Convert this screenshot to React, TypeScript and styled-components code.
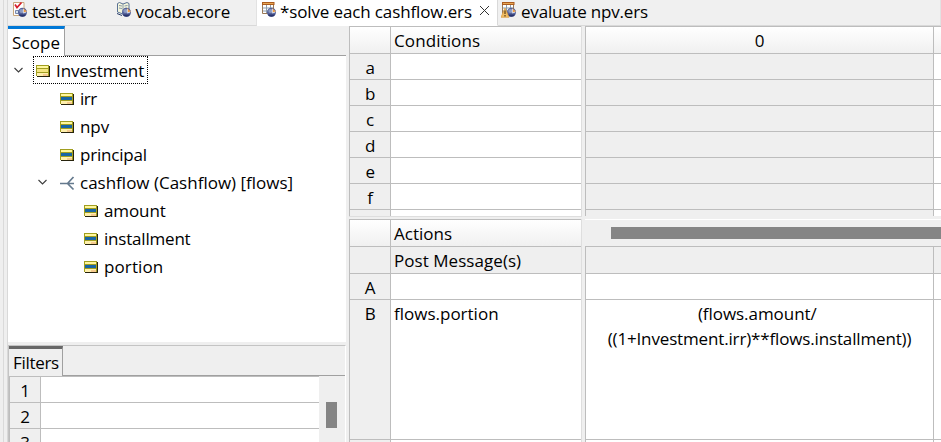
import React from "react";
import styled, { createGlobalStyle } from "styled-components";

const GlobalStyle = createGlobalStyle`
  * { box-sizing: border-box; }
  html, body { margin: 0; overflow: hidden; background: #f0f0f0; }
  body { font-family: "Open Sans", "Noto Sans", sans-serif; font-size: 17px; color: #000; }
`;

const line = "#bdbdbd";
const face = "#efefef";

const Window = styled.div`
  width: 941px;
  height: 442px;
  display: grid;
  grid-template-columns: 8px 1fr;
  overflow: hidden;
  background: ${face};
`;
const Edge = styled.div`
  border-right: 1px solid #d9d9d9;
  display: flex;
  &::before { content: ""; width: 3px; border-right: 1px solid #dadada; }
`;
const Main = styled.div`
  display: grid;
  grid-template-rows: 26px 416px;
  min-width: 0;
`;
const TabBar = styled.div`
  display: flex;
  background: #f0f0f0;
`;
const EditorTab = styled.div<{ $w?: number; $active?: boolean; $pad: number }>`
  flex: ${(p) => (p.$w ? `0 0 ${p.$w}px` : "1")};
  display: flex;
  align-items: flex-start;
  padding-left: ${(p) => p.$pad}px;
  background: ${(p) => (p.$active ? "#fff" : "#f0f0f0")};
  border-bottom: 1px solid ${(p) => (p.$active ? "#fff" : "#d9d9d9")};
  border-right: 1px solid ${(p) => (p.$active ? "#d9d9d9" : "#e2e2e2")};
  svg { flex: none; }
`;
const Text = styled.span<{ $ls?: number; $left?: number }>`
  white-space: pre;
  line-height: 24px;
  letter-spacing: ${(p) => p.$ls ?? -0.3}px;
  margin-left: ${(p) => p.$left ?? 0}px;
`;
const Close = styled.svg`
  margin: 5px 0 0 7px;
`;
const Body = styled.div`
  display: grid;
  grid-template-columns: 338px 3px 1fr;
  min-width: 0;
`;
const Side = styled.div`
  display: grid;
  grid-template-rows: 316px 100px;
`;
const Panel = styled.div`
  display: flex;
  flex-direction: column;
  overflow: hidden;
`;
const FilterPanel = styled(Panel)`
  margin-top: 3px;
  border-top: 1px solid #c4c4c4;
  border-left: 1px solid #c4c4c4;
  border-right: 1px solid #fff;
`;
const PanelTabs = styled.div`
  display: flex;
  height: 30px;
  flex: none;
  &::after { content: ""; flex: 1; border-bottom: 1px solid #a0a0a0; }
`;
const PanelTab = styled.div<{ $accent: string; $w: number; $bg: string }>`
  width: ${(p) => p.$w}px;
  border-top: 3px solid ${(p) => p.$accent};
  border-right: 1px solid #a0a0a0;
  background: ${(p) => p.$bg};
  padding: 2px 0 0 4px;
  white-space: nowrap;
`;
const Tree = styled.div`
  flex: 1;
  background: #fff;
`;
const TreeRow = styled.div<{ $depth: number }>`
  height: 28px;
  display: flex;
  align-items: center;
  padding-left: ${(p) => 4 + p.$depth * 24}px;
`;
const Twisty = styled.div`
  width: 24px;
  height: 28px;
  display: flex;
  flex: none;
  padding: 10px 0 0 2px;
`;
const NodeLabel = styled.div<{ $focus?: boolean }>`
  display: flex;
  align-items: center;
  height: 28px;
  width: ${(p) => (p.$focus ? "115px" : "auto")};
  margin-left: -3px;
  padding: 2px 0 0 2px;
  border: 1px dotted ${(p) => (p.$focus ? "#000" : "transparent")};
  svg { margin-right: 5px; flex: none; }
`;
const FilterBody = styled.div`
  display: grid;
  grid-template-columns: 310px 1fr;
  grid-template-rows: 100%;
  flex: 1;
  min-height: 0;
`;
const Rows = styled.div`
  overflow: hidden;
  border-left: 1px solid ${line};
`;
const FilterRow = styled.div`
  display: grid;
  grid-template-columns: 30px 1fr;
  grid-template-rows: 25px;
  height: 26px;
  border-top: 1px solid ${line};
`;
const FilterNumber = styled.div`
  background: ${face};
  text-align: center;
  line-height: 27px;
`;
const FilterValue = styled.div`
  background: #fff;
  border-left: 1px solid ${line};
`;
const VScroll = styled.div`
  padding: 26px 0 0 7px;
  &::before { content: ""; display: block; width: 11px; height: 26px; background: #858585; }
`;
const Sheet = styled.div`
  display: grid;
  grid-template-columns: 233px 3px 1fr;
  grid-template-rows: 190px 3px 223px;
  min-width: 0;
`;
const Sash = styled.div`
  background: ${face};
  grid-row: 1 / 4;
  grid-column: 2;
`;
const Gap = styled.div`
  border-top: 1px solid #dedede;
`;
const Pane = styled.div<{ $col: number; $row: number }>`
  grid-column: ${(p) => p.$col};
  grid-row: ${(p) => p.$row};
  overflow: hidden;
  border-right: ${(p) => (p.$col === 1 ? "1px solid #dedede" : "0")};
`;
const RuleRow = styled.div<{ $h: number; $right?: boolean }>`
  display: grid;
  grid-template-columns: ${(p) => (p.$right ? "348px 1fr" : "41px 1fr")};
  grid-template-rows: ${(p) => p.$h}px;
`;
const Cell = styled.div<{ $kind?: "head" | "face" | "white"; $center?: boolean }>`
  border-top: 1px solid ${line};
  border-left: 1px solid ${line};
  background: ${(p) =>
    p.$kind === "head" ? "linear-gradient(#fff, #f0f0f0)" : p.$kind === "face" ? face : "#fff"};
  padding: 2px 0 0 ${(p) => (p.$center ? 0 : 3)}px;
  text-align: ${(p) => (p.$center ? "center" : "left")};
  white-space: nowrap;
`;
const Formula = styled.div`
  line-height: 25px;
  white-space: pre;
  &:first-child { margin-top: -1px; }
`;
const HScroll = styled.div`
  height: 27px;
  border-top: 1px solid #fff;
  padding: 7px 0 0 26px;
  &::before { content: ""; display: block; height: 12px; background: #858585; }
`;

type DocKind = "test" | "vocab" | "sheet" | "warn";
const DocIcon = ({ kind }: { kind: DocKind }) => (
  <svg width="18" height="20" viewBox="0 0 18 20">
    {kind === "test" && (
      <g>
        <path d="M1.5 2.500h10.500v13h-10.500z" fill="#fff" stroke="#c9a77c" />
        <path d="M3 4.500l2 3 4.500-5" fill="none" stroke="#d6202c" strokeWidth="1.700" />
        <path d="M3.500 10.500h3v3h-3z" fill="#d5e2ee" stroke="#7889ad" />
      </g>
    )}
    {kind === "vocab" && (
      <g stroke="#5b7294">
        <path d="M1.500 3.500l2-1 3.500 1.500 4-1.500 2 1v9l-6 1.500-5.500-2z" fill="#f4f6dc" />
        <path d="M7 4v9M3 5.500l3 .5M3 8l3 .5M8.500 6l3-.5M8.500 8.500l2-.5" fill="none" stroke="#8999a8" />
        <path d="M1 13.500l5 2" stroke="#263c68" />
      </g>
    )}
    {(kind === "sheet" || kind === "warn") && (
      <g>
        <path d="M1.500 3h11v10.500h-11z" fill="#fff" stroke="#9a7855" />
        <path d="M1 2h12.500v3h-12.500z" fill="#ad5c1f" />
        <path d="M2 3.500h10.500" stroke="#e7a855" />
        <path d="M2 8h10M2 11h8M5.500 5v8M9.500 5v6" stroke="#8c9cab" />
      </g>
    )}
    <circle cx="10.500" cy="12.300" r="4.500" fill="#56629a" />
    <path d="M6.500 14.500a4.500 4.500 0 0 0 7.800 0z" fill="#29346c" />
    <circle cx="9.300" cy="11" r="2" fill="#8c9bc2" />
    <path d="M11 8l4 3.500-3.500 1.500z" fill="#ef9b41" />
    <path d="M11.300 9v4l3-1" fill="none" stroke="#d9dfed" />
    {kind === "warn" && (
      <g>
        <path d="M4 8l4 9.300h-8z" fill="#f0bd65" stroke="#dd9a38" strokeWidth=".7" />
        <path d="M4 10.500v3.500M4 15v1.500" stroke="#5d3c12" strokeWidth="1.200" />
      </g>
    )}
  </svg>
);

const EntityIcon = ({ attribute }: { attribute?: boolean }) => (
  <svg width="15" height="13" viewBox="0 0 15 13" shapeRendering="crispEdges">
    <path d="M1 1h13v11h-13z" fill="#27230c" />
    <path d="M0 0h13v11h-13z" fill="#a19e20" />
    <path d="M1 1h11v2h-11z" fill="#fff79c" />
    <path d="M1 4h11v3h-11z" fill={attribute ? "#1765a5" : "#f5e681"} />
    <path d="M1 8h11v3h-11z" fill="#fff0ad" />
    <path d="M7 9h5v2h-5z" fill="#f6cb90" />
  </svg>
);
const BranchIcon = () => (
  <svg width="15" height="15" viewBox="0 0 15 15">
    <path d="M0 7.500h14M7.500 7.500l6-6.500M7.500 7.500l6 6" fill="none" stroke="#64798d" strokeWidth="1.700" />
  </svg>
);
const Chevron = () => (
  <svg width="9" height="9" viewBox="0 0 9 9">
    <path d="M.5 2l4 4 4-4" fill="none" stroke="#3c3c3c" strokeWidth="1.100" />
  </svg>
);

type Node = { label: string; depth: number; kind: "entity" | "attr" | "assoc"; ls?: number };
const nodes: Node[] = [
  { label: "Investment", depth: 0, kind: "entity", ls: -0.1 },
  { label: "irr", depth: 1, kind: "attr", ls: -0.5 },
  { label: "npv", depth: 1, kind: "attr", ls: -0.1 },
  { label: "principal", depth: 1, kind: "attr", ls: -0.2 },
  { label: "cashflow (Cashflow) [flows]", depth: 1, kind: "assoc", ls: 0 },
  { label: "amount", depth: 2, kind: "attr", ls: -0.1 },
  { label: "installment", depth: 2, kind: "attr", ls: -0.2 },
  { label: "portion", depth: 2, kind: "attr", ls: 0.1 },
];

export default function App() {
  return (
    <Window>
      <GlobalStyle />
      <Edge />
      <Main>
        <TabBar>
          <EditorTab $w={249} $pad={4}>
            <DocIcon kind="test" />
            <Text $left={2} $ls={-0.4}>test.ert</Text>
            <Text $left={30} />
            <DocIcon kind="vocab" />
            <Text $left={2} $ls={-0.1}>vocab.ecore</Text>
          </EditorTab>
          <EditorTab $w={241} $pad={4} $active>
            <DocIcon kind="sheet" />
            <Text $left={1} $ls={-0.13}>*solve each cashflow.ers</Text>
            <Close width="11" height="11" viewBox="0 0 11 11">
              <path d="M1 1l9 9M10 1l-9 9" stroke="#333" />
            </Close>
          </EditorTab>
          <EditorTab $pad={3}>
            <DocIcon kind="warn" />
            <Text $left={2} $ls={-0.2}>evaluate npv.ers</Text>
          </EditorTab>
        </TabBar>
        <Body>
          <Side>
            <Panel>
              <PanelTabs>
                <PanelTab $accent="#0078d7" $w={57} $bg="#fff"><Text $ls={0.1}>Scope</Text></PanelTab>
              </PanelTabs>
              <Tree>
                {nodes.map((n) => (
                  <TreeRow key={n.label} $depth={n.depth}>
                    <Twisty>{n.kind !== "attr" && <Chevron />}</Twisty>
                    <NodeLabel $focus={n.kind === "entity"}>
                      {n.kind === "assoc" ? <BranchIcon /> : <EntityIcon attribute={n.kind === "attr"} />}
                      <Text $ls={n.ls}>{n.label}</Text>
                    </NodeLabel>
                  </TreeRow>
                ))}
              </Tree>
            </Panel>
            <FilterPanel>
              <PanelTabs>
                <PanelTab $accent="#686868" $w={54} $bg={face}><Text>Filters</Text></PanelTab>
              </PanelTabs>
              <FilterBody>
                <Rows>
                  {[1, 2, 3].map((n) => (
                    <FilterRow key={n}>
                      <FilterNumber>{n}</FilterNumber>
                      <FilterValue />
                    </FilterRow>
                  ))}
                </Rows>
                <VScroll />
              </FilterBody>
            </FilterPanel>
          </Side>
          <div />
          <Sheet>
            <Pane $col={1} $row={1}>
              <RuleRow $h={27}>
                <Cell $kind="head" />
                <Cell $kind="head"><Text $ls={0.1}>Conditions</Text></Cell>
              </RuleRow>
              {["a", "b", "c", "d", "e", "f", ""].map((l) => (
                <RuleRow $h={26} key={l}>
                  <Cell $kind="face" $center><Text>{l}</Text></Cell>
                  <Cell />
                </RuleRow>
              ))}
            </Pane>
            <Sash />
            <Pane $col={3} $row={1}>
              <RuleRow $h={27} $right>
                <Cell $kind="head" $center><Text>0</Text></Cell>
                <Cell $kind="head" />
              </RuleRow>
              {["a", "b", "c", "d", "e", "f", "g"].map((l) => (
                <RuleRow $h={26} $right key={l}>
                  <Cell $kind="face" />
                  <Cell />
                </RuleRow>
              ))}
            </Pane>
            <Gap />
            <Pane $col={1} $row={3}>
              <RuleRow $h={27}>
                <Cell $kind="head" />
                <Cell $kind="head"><Text $ls={0}>Actions</Text></Cell>
              </RuleRow>
              <RuleRow $h={27}>
                <Cell $kind="face" />
                <Cell $kind="face"><Text $ls={0.05}>Post Message(s)</Text></Cell>
              </RuleRow>
              <RuleRow $h={26}>
                <Cell $kind="face" $center><Text>A</Text></Cell>
                <Cell />
              </RuleRow>
              <RuleRow $h={140}>
                <Cell $kind="face" $center><Text>B</Text></Cell>
                <Cell><Text $ls={0}>flows.portion</Text></Cell>
              </RuleRow>
              <RuleRow $h={26}><Cell $kind="face" /><Cell /></RuleRow>
            </Pane>
            <Pane $col={3} $row={3}>
              <HScroll />
              <RuleRow $h={27} $right><Cell $kind="face" /><Cell $kind="face" /></RuleRow>
              <RuleRow $h={26} $right><Cell /><Cell /></RuleRow>
              <RuleRow $h={140} $right>
                <Cell $center>
                  <Formula><Text $ls={-0.05}>(flows.amount/ </Text></Formula>
                  <Formula><Text $ls={-0.15}>((1+Investment.irr)**flows.installment))</Text></Formula>
                </Cell>
                <Cell />
              </RuleRow>
              <RuleRow $h={26} $right><Cell /><Cell /></RuleRow>
            </Pane>
          </Sheet>
        </Body>
      </Main>
    </Window>
  );
}
